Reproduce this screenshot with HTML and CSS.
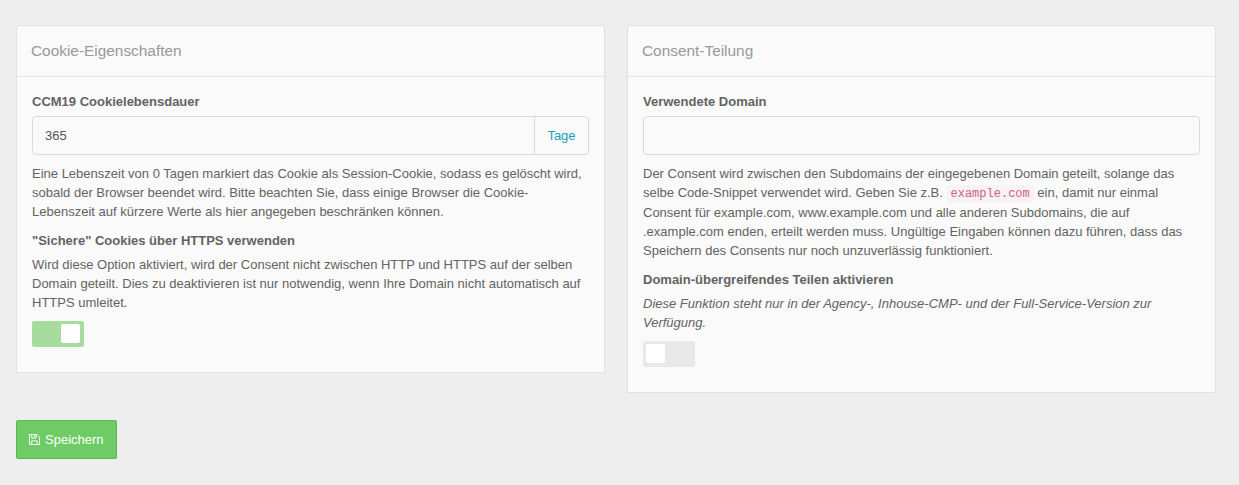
FILE: index.html
```html
<!DOCTYPE html>
<html lang="de">
<head>
<meta charset="utf-8">
<title>Cookie-Eigenschaften</title>
<link rel="stylesheet" href="styles.css">
</head>
<body>
<form class="settings">
  <div class="columns">
    <section class="card">
      <h2 class="card-header">Cookie-Eigenschaften</h2>
      <div class="card-body">
        <label class="label">CCM19 Cookielebensdauer</label>
        <div class="field"><span class="value">365</span><span class="unit">Tage</span></div>
        <p class="help">Eine Lebenszeit von 0 Tagen markiert das Cookie als Session-Cookie, sodass es gelöscht wird,<br>sobald der Browser beendet wird. Bitte beachten Sie, dass einige Browser die Cookie-<br>Lebenszeit auf kürzere Werte als hier angegeben beschränken können.</p>
        <label class="label">"Sichere" Cookies über HTTPS verwenden</label>
        <p class="help">Wird diese Option aktiviert, wird der Consent nicht zwischen HTTP und HTTPS auf der selben<br>Domain geteilt. Dies zu deaktivieren ist nur notwendig, wenn Ihre Domain nicht automatisch auf<br>HTTPS umleitet.</p>
        <div class="switch switch-on"><span class="knob"></span></div>
      </div>
    </section>
    <section class="card">
      <h2 class="card-header">Consent-Teilung</h2>
      <div class="card-body">
        <label class="label">Verwendete Domain</label>
        <div class="field"></div>
        <p class="help">Der Consent wird zwischen den Subdomains der eingegebenen Domain geteilt, solange das<br>selbe Code-Snippet verwendet wird. Geben Sie z.B. <code class="code">example.com</code> ein, damit nur einmal<br>Consent für example.com, www.example.com und alle anderen Subdomains, die auf<br>.example.com enden, erteilt werden muss. Ungültige Eingaben können dazu führen, dass das<br>Speichern des Consents nur noch unzuverlässig funktioniert.</p>
        <label class="label">Domain-übergreifendes Teilen aktivieren</label>
        <p class="help"><em>Diese Funktion steht nur in der Agency-, Inhouse-CMP- und der Full-Service-Version zur<br>Verfügung.</em></p>
        <div class="switch"><span class="knob"></span></div>
      </div>
    </section>
  </div>
  <button class="save" type="button">
    <svg class="icon" viewBox="0 0 12 12"><path d="M.5.5H8.5L11.5 3.5V11.5H.5ZM3 .5V4.5H7.7V.5M3 11.5V7.5H9V11.5M6 1V3.6" fill="none" stroke="currentColor" stroke-width="1"/></svg>
    <span>Speichern</span>
  </button>
</form>
</body>
</html>
```
FILE: styles.css
```css
* { box-sizing: border-box; }
body {
  margin: 0;
  background: #eee;
  color: #636363;
  font: 13px/19px "Liberation Sans", Arial, sans-serif;
}
.settings { padding: 25px 23px 0 16px; }
.columns {
  display: grid;
  grid-template-columns: 589px 589px;
  gap: 22px;
  align-items: start;
}
.card {
  background: #fafafa;
  border: 1px solid #e1e1e1;
  border-radius: 3px 3px 0 0;
}
.card-header {
  margin: 0;
  height: 51px;
  padding: 0 14px;
  border-bottom: 1px solid #e1e1e1;
  color: #999;
  font-size: 15.4px;
  font-weight: 400;
  line-height: 50px;
}
.card-body { padding: 15px 15px 25px; }
.label {
  display: block;
  margin-bottom: 5px;
  font-weight: 700;
}
.field {
  display: flex;
  height: 39px;
  margin-bottom: 9px;
  border: 1px solid #dadada;
  border-radius: 4px;
  line-height: 37px;
}
.value { flex: 1; padding-left: 12px; color: #555; }
.unit {
  width: 54px;
  border-left: 1px solid #dadada;
  color: #1f9dc0;
  text-align: center;
}
.help { margin: 0 0 10px; white-space: nowrap; }
.code {
  padding: 2px 4px;
  border-radius: 3px;
  background: #f9f2f4;
  color: #cf5f80;
  font: 12px/18px "Liberation Mono", monospace;
}
.switch {
  display: flex;
  width: 52px;
  height: 26px;
  margin-top: -1px;
  padding: 3px;
  border-radius: 2px;
  background: #e8e8e8;
}
.switch-on { justify-content: flex-end; padding-right: 4px; background: #a6dd9f; }
.knob { width: 19px; height: 19px; border-radius: 2px; background: #fff; }
.save {
  display: flex;
  align-items: center;
  gap: 5px;
  width: 101px;
  height: 39px;
  margin: 27px 0 0;
  padding: 0 12px;
  border: 1px solid #5cb553;
  border-radius: 2px;
  background: #6fcb65;
  color: #fff;
  font: inherit;
}
.icon { width: 11px; height: 11px; }
```
